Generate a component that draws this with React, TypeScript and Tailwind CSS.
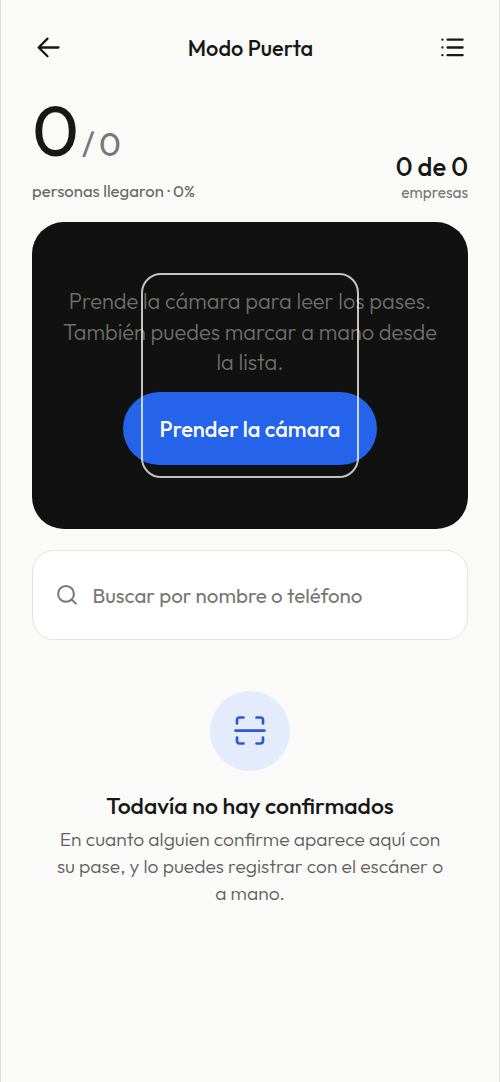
const ArrowLeft = () => (
  <svg width="24" height="24" viewBox="0 0 24 24" fill="none" stroke="currentColor" strokeWidth="2.3" strokeLinecap="round" strokeLinejoin="round">
    <path d="M21.5 11.500H1.700M10.500 2.600L1.700 11.500l8.800 8.800" />
  </svg>
);

const ListIcon = () => (
  <svg width="24" height="20" viewBox="0 0 24 20" fill="none" stroke="currentColor" strokeWidth="2.3" strokeLinecap="round">
    <path d="M7.600 1.700h15M7.600 9.500h15M7.600 17.200h15M2.400 1.700h.01M2.400 9.500h.01M2.400 17.200h.01" />
  </svg>
);

const SearchIcon = () => (
  <svg width="20" height="20" viewBox="0 0 20 20" fill="none" stroke="currentColor" strokeWidth="2" strokeLinecap="round">
    <circle cx="9" cy="8.9" r="7.9" />
    <path d="M14.8 14.6l4 4" />
  </svg>
);

const ScanIcon = () => (
  <svg width="32" height="32" viewBox="0 0 32 32" fill="none" stroke="currentColor" strokeWidth="2.7" strokeLinecap="round" strokeLinejoin="round">
    <path d="M3 8.500V5a2.500 2.500 0 0 1 2.500-2.500H9.500M22.500 2.500h4A2.500 2.500 0 0 1 29 5V8.500M29 22.500v3.500a2.500 2.500 0 0 1-2.500 2.500H22.500M9.500 28.500H5.500A2.500 2.500 0 0 1 3 26V22.500M1.500 15.600h29" />
  </svg>
);

export default function App() {
  return (
    <main className="flex h-[1082px] w-full flex-col border-x border-[#dededc] bg-[#fafaf8] px-[31px] font-['Outfit','Lato',sans-serif] text-[#171714]">
      <header className="flex h-[96px] items-center justify-between pr-1 pl-[5px]">
        <button aria-label="Volver" className="w-6">
          <ArrowLeft />
        </button>
        <h1 className="text-[21.8px] leading-7 font-medium whitespace-nowrap">Modo Puerta</h1>
        <button aria-label="Lista" className="w-6">
          <ListIcon />
        </button>
      </header>

      <section className="flex h-[126px] justify-between">
        <div>
          <div className="flex h-[83px] items-baseline pt-px">
            <span className="-mt-[2px] text-[71.7px] leading-[70px] tracking-[-1.4px]">0</span>
            <span className="ml-[4px] text-[33.3px] leading-9 tracking-[-1.3px] text-[#777774]">/ 0</span>
          </div>
          <p className="text-[16.7px] leading-6 whitespace-nowrap text-[#686865]">personas llegaron · 0%</p>
        </div>
        <div className="pt-[55px] text-right">
          <p className="text-[25.6px] leading-8 font-medium whitespace-nowrap">0 de 0</p>
          <p className="text-[15.4px] leading-[19px] text-[#777774]">empresas</p>
        </div>
      </section>

      <section className="relative flex h-[307px] shrink-0 flex-col items-center rounded-[32px] bg-[#111111] pt-[64px]">
        <p className="text-center text-[21.8px] leading-[30.5px] font-light whitespace-nowrap text-[#6f6f6b]">
          <span className="block">Prende la cámara para leer los pases.</span>
          <span className="block">También puedes marcar a mano desde</span>
          <span className="block">la lista.</span>
        </p>
        <button className="mt-[14.5px] h-[73px] w-[254px] rounded-full bg-[#2563eb] pt-px text-[21.8px] font-medium whitespace-nowrap text-white">
          Prender la cámara
        </button>
        <div className="pointer-events-none absolute top-[51px] left-[109px] h-[205px] w-[218px] rounded-[20px] border-2 border-white/75" />
      </section>

      <label className="mt-[21px] flex h-[90px] shrink-0 items-center rounded-[22px] border border-[#e4e4e0] bg-white pl-6 text-[#777774]">
        <SearchIcon />
        <span className="ml-[15.5px] text-[20.5px] whitespace-nowrap">Buscar por nombre o teléfono</span>
      </label>

      <section className="flex flex-col items-center pt-[51px]">
        <div className="flex size-20 items-center justify-center rounded-full bg-[#e4ebfd] text-[#2b5bd3]">
          <ScanIcon />
        </div>
        <h2 className="mt-[20px] text-[23px] leading-[30px] font-medium whitespace-nowrap">Todavía no hay confirmados</h2>
        <p className="mt-[5px] text-center text-[19.25px] leading-[27px] font-light whitespace-nowrap text-[#5f5f5c]">
          <span className="block">En cuanto alguien confirme aparece aquí con</span>
          <span className="block">su pase, y lo puedes registrar con el escáner o</span>
          <span className="block">a mano.</span>
        </p>
      </section>
    </main>
  );
}
